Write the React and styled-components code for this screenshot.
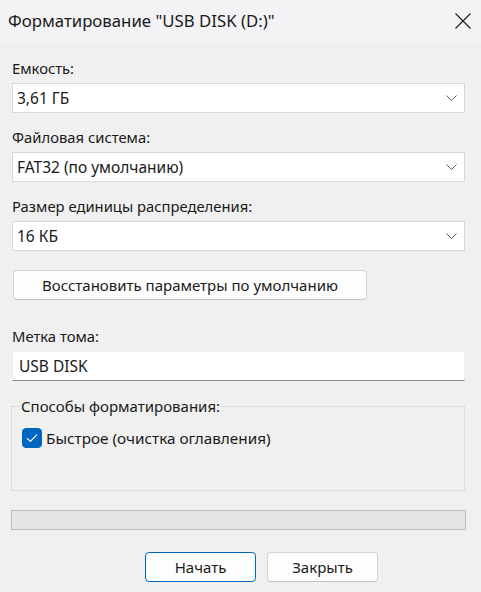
import React, { useState } from "react";
import styled, { createGlobalStyle } from "styled-components";

const GlobalStyle = createGlobalStyle`
  html, body {
    margin: 0;
    padding: 0;
    background: #f0f0f0;
  }
  body {
    font-family: "Noto Sans", "Open Sans", sans-serif;
    color: #1a1a1a;
  }
  * {
    box-sizing: border-box;
  }
`;

const Dialog = styled.div`
  width: 481px;
  height: 592px;
  background: #f0f0f0;
  display: flex;
  flex-direction: column;
  overflow: hidden;
`;

const TitleBar = styled.div`
  height: 43px;
  flex-shrink: 0;
  background: #f3f3f5;
  display: flex;
  align-items: center;
  justify-content: space-between;
  padding: 0 10px 0 8px;
`;

const TitleText = styled.div`
  font-size: 16.8px;
  color: #1a1a1a;
  padding-bottom: 2px;
`;

const CloseButton = styled.button`
  width: 16px;
  height: 16px;
  padding: 0;
  border: none;
  background: transparent;
  display: flex;
  align-items: center;
  justify-content: center;
  margin-bottom: 2px;
`;

const Content = styled.div`
  flex: 1;
  display: flex;
  flex-direction: column;
  padding: 15px 16px 10px 12px;
`;

const Field = styled.div`
  display: flex;
  flex-direction: column;
  gap: 5px;
  margin-bottom: ${(p) => p.$after || 14}px;
`;

const Label = styled.div`
  font-size: 14.8px;
  line-height: 20px;
  height: 20px;
`;

const Select = styled.div`
  height: 30px;
  background: #ffffff;
  border: 1px solid #d9d9d9;
  display: flex;
  align-items: center;
  justify-content: space-between;
  padding: 0 7px 0 4px;
  font-size: 15.5px;
`;

const TextInput = styled.input`
  height: 30px;
  background: #ffffff;
  border: 1px solid #ececec;
  border-bottom-color: #8a8a8a;
  padding: 0 6px;
  font-family: inherit;
  font-size: 15.5px;
  color: #1a1a1a;
  outline: none;
`;

const PushButton = styled.button`
  height: 30px;
  width: ${(p) => p.$width}px;
  background: #fdfdfd;
  border: 1px solid ${(p) => (p.$primary ? "#0067c0" : "#d3d3d3")};
  border-bottom-color: ${(p) => (p.$primary ? "#0067c0" : "#c2c2c2")};
  border-radius: 4px;
  font-family: inherit;
  font-size: 15px;
  color: #1a1a1a;
  padding: 0;
`;

const RestoreRow = styled.div`
  padding-left: 1px;
  margin-bottom: 26px;
`;

const GroupBox = styled.fieldset`
  margin: 0 0 19px -1px;
  padding: 12px 10px 40px 10px;
  border: 1px solid #dcdcdc;
  min-width: 0;
  height: 95px;
`;

const Legend = styled.legend`
  font-size: 15px;
  line-height: 20px;
  padding: 0 1px;
  margin-left: -2px;
`;

const CheckRow = styled.label`
  display: flex;
  align-items: center;
  gap: 4px;
  font-size: 15.3px;
  line-height: 20px;
  cursor: default;
`;

const CheckBox = styled.span`
  width: 20px;
  height: 20px;
  border-radius: 4px;
  background: ${(p) => (p.$checked ? "#0067c0" : "#ffffff")};
  border: 1px solid ${(p) => (p.$checked ? "#0067c0" : "#8a8a8a")};
  display: flex;
  align-items: center;
  justify-content: center;
  flex-shrink: 0;
`;

const Progress = styled.div`
  height: 20px;
  margin-left: -1px;
  margin-right: -1px;
  background: #e6e6e6;
  border: 1px solid #bcbcbc;
  margin-bottom: 22px;
`;

const ButtonRow = styled.div`
  display: flex;
  gap: 11px;
  padding-left: 133px;
`;

const Chevron = () => (
  <svg width="11" height="6" viewBox="0 0 11 6" fill="none">
    <path d="M0.5 0.5 L5.5 5.5 L10.5 0.5" stroke="#5f5f5f" strokeWidth="1" />
  </svg>
);

const CloseIcon = () => (
  <svg width="16" height="16" viewBox="0 0 16 16" fill="none">
    <path d="M0.5 0.5 L15.5 15.5 M15.5 0.5 L0.5 15.5" stroke="#1a1a1a" strokeWidth="1.1" />
  </svg>
);

const CheckIcon = () => (
  <svg width="12" height="10" viewBox="0 0 12 10" fill="none">
    <path d="M1 5.2 L4.3 8.4 L11 1.6" stroke="#ffffff" strokeWidth="1.1" />
  </svg>
);

const App = () => {
  const [quick, setQuick] = useState(true);
  const [label, setLabel] = useState("USB DISK");

  return (
    <Dialog>
      <GlobalStyle />
      <TitleBar>
        <TitleText>Форматирование "USB DISK (D:)"</TitleText>
        <CloseButton aria-label="Закрыть">
          <CloseIcon />
        </CloseButton>
      </TitleBar>
      <Content>
        <Field>
          <Label>Емкость:</Label>
          <Select>
            <span>3,61 ГБ</span>
            <Chevron />
          </Select>
        </Field>
        <Field>
          <Label>Файловая система:</Label>
          <Select>
            <span>FAT32 (по умолчанию)</span>
            <Chevron />
          </Select>
        </Field>
        <Field $after={19}>
          <Label>Размер единицы распределения:</Label>
          <Select>
            <span>16 КБ</span>
            <Chevron />
          </Select>
        </Field>
        <RestoreRow>
          <PushButton $width={354}>Восстановить параметры по умолчанию</PushButton>
        </RestoreRow>
        <Field $after={15}>
          <Label>Метка тома:</Label>
          <TextInput value={label} onChange={(e) => setLabel(e.target.value)} />
        </Field>
        <GroupBox>
          <Legend>Способы форматирования:</Legend>
          <CheckRow onClick={() => setQuick(!quick)}>
            <CheckBox $checked={quick}>{quick && <CheckIcon />}</CheckBox>
            Быстрое (очистка оглавления)
          </CheckRow>
        </GroupBox>
        <Progress />
        <ButtonRow>
          <PushButton $width={111} $primary>Начать</PushButton>
          <PushButton $width={111}>Закрыть</PushButton>
        </ButtonRow>
      </Content>
    </Dialog>
  );
};

export default App;
